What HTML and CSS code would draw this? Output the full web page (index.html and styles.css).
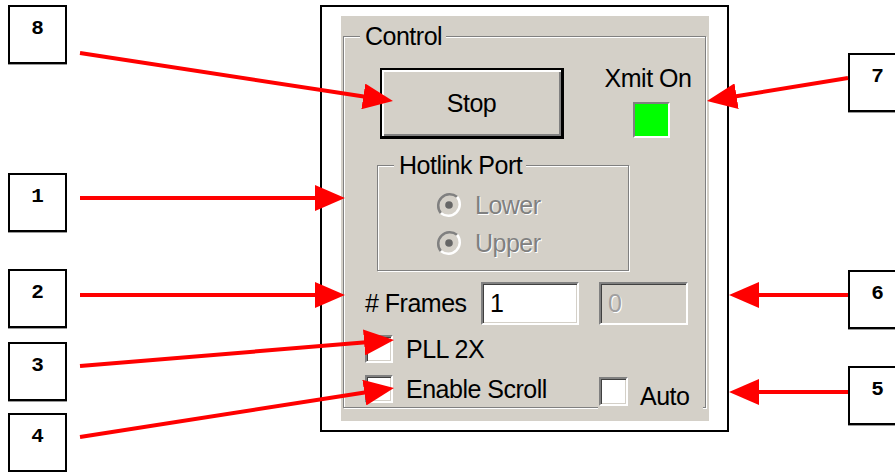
FILE: index.html
```
<!DOCTYPE html>
<html>
<head>
<meta charset="utf-8">
<link rel="stylesheet" href="styles.css">
</head>
<body>
<div class="canvas">
  <div class="frame">
    <div class="panel">
      <fieldset class="group control">
        <legend>Control</legend>
        <div class="top-row">
          <button class="btn">Stop</button>
          <div class="xmit">
            <span class="xmit-label">Xmit On</span>
            <span class="led"></span>
          </div>
        </div>
        <fieldset class="group hotlink">
          <legend>Hotlink Port</legend>
          <div class="radio">
            <svg class="radio-ico" viewBox="0 0 26 26" width="26" height="26">
              <circle cx="13" cy="13" r="11" fill="#d4d0c8"/>
              <path d="M4.9 21.1 A11.5 11.5 0 0 1 21.1 4.9" fill="none" stroke="#808080" stroke-width="2.5"/>
              <path d="M21.1 4.9 A11.5 11.5 0 0 1 4.9 21.1" fill="none" stroke="#ffffff" stroke-width="2.5"/>
              <circle cx="13" cy="13" r="3.8" fill="#666666"/>
            </svg>
            <span class="dis">Lower</span>
          </div>
          <div class="radio">
            <svg class="radio-ico" viewBox="0 0 26 26" width="26" height="26">
              <circle cx="13" cy="13" r="11" fill="#d4d0c8"/>
              <path d="M4.9 21.1 A11.5 11.5 0 0 1 21.1 4.9" fill="none" stroke="#808080" stroke-width="2.5"/>
              <path d="M21.1 4.9 A11.5 11.5 0 0 1 4.9 21.1" fill="none" stroke="#ffffff" stroke-width="2.5"/>
              <circle cx="13" cy="13" r="3.8" fill="#666666"/>
            </svg>
            <span class="dis">Upper</span>
          </div>
        </fieldset>
        <div class="frames-row">
          <span class="frames-label"># Frames</span>
          <div class="field">1</div>
          <div class="field field-dis">0</div>
        </div>
        <div class="check-row">
          <span class="box"></span>
          <span class="check-text">PLL 2X</span>
        </div>
        <div class="last-row">
          <div class="check-row scroll">
            <span class="box"></span>
            <span class="check-text">Enable Scroll</span>
          </div>
          <div class="auto">
            <span class="box"></span>
            <span class="check-text auto-text">Auto</span>
          </div>
        </div>
      </fieldset>
    </div>
  </div>

  <div class="callout c8">8</div>
  <div class="callout c1">1</div>
  <div class="callout c2">2</div>
  <div class="callout c3">3</div>
  <div class="callout c4">4</div>
  <div class="callout c7">7</div>
  <div class="callout c6">6</div>
  <div class="callout c5">5</div>

  <svg class="arrows" width="895" height="472" viewBox="0 0 895 472">
    <defs>
      <marker id="ah" markerUnits="userSpaceOnUse" markerWidth="30" markerHeight="26" refX="2" refY="13" orient="auto">
        <path d="M0,0 L30,13 L0,26 z" fill="#ff0000"/>
      </marker>
    </defs>
    <g stroke="#ff0000" stroke-width="4" marker-end="url(#ah)">
      <line x1="80" y1="53" x2="365.3" y2="96.7"/>
      <line x1="848" y1="78" x2="734.6" y2="96.5"/>
      <line x1="80" y1="198" x2="317" y2="198"/>
      <line x1="80" y1="295" x2="317" y2="295"/>
      <line x1="848" y1="295" x2="757" y2="295"/>
      <line x1="848" y1="392" x2="757" y2="392"/>
      <line x1="80" y1="366" x2="366.1" y2="342.3"/>
      <line x1="80" y1="437" x2="366.3" y2="392.3"/>
    </g>
  </svg>
</div>
</body>
</html>
```
FILE: styles.css
```
html, body {
  margin: 0;
  padding: 0;
  background: #ffffff;
}
.canvas {
  position: relative;
  width: 895px;
  height: 472px;
  overflow: hidden;
  font-family: "Liberation Sans", Arial, sans-serif;
}
.frame {
  position: absolute;
  left: 320px;
  top: 5px;
  width: 409px;
  height: 427px;
  box-sizing: border-box;
  border: 2px solid #000;
  background: #fff;
  padding: 9px 18px 9px 19px;
}
.panel {
  height: 100%;
  background: #d4d0c8;
  padding: 6px 0 0 2px;
  box-sizing: border-box;
  font-size: 25px;
  letter-spacing: -0.5px;
  color: #000;
}
.group {
  margin: 0;
  box-sizing: border-box;
  border: 1px solid #808080;
  box-shadow: inset 1px 1px 0 #fff, 1px 1px 0 #fff;
  min-inline-size: 0;
}
.group > legend {
  background: #d4d0c8;
  line-height: 28px;
  padding: 0 4px 0 5px;
}
.control {
  width: 363px;
  height: 386px;
  padding: 18px 0 0 21px;
}
.control > legend {
  margin-left: -5px;
}
.top-row {
  display: flex;
  align-items: flex-start;
}
.btn {
  margin: 0 0 0 15px;
  width: 184px;
  height: 71px;
  box-sizing: border-box;
  background: #d4d0c8;
  border-style: solid;
  border-color: #000;
  border-width: 2px 3px 3px 2px;
  box-shadow: inset 2px 2px 0 #fff, inset -2px -2px 0 #808080;
  font: inherit;
  letter-spacing: inherit;
  color: #000;
  padding: 0;
}
.xmit {
  margin: -4px 0 0 41px;
  width: 86px;
  display: flex;
  flex-direction: column;
  align-items: center;
}
.xmit-label {
  line-height: 28px;
  white-space: nowrap;
}
.led {
  margin: 10px 0 0 7px;
  width: 37px;
  height: 36px;
  box-sizing: border-box;
  background: #00ff00;
  border-style: solid;
  border-width: 2px;
  border-color: #808080 #fff #fff #808080;
}
.hotlink {
  margin: 12px 0 0 12px;
  width: 252px;
  height: 120px;
  padding: 7px 0 0 58px;
}
.hotlink > legend {
  margin-left: -42px;
}
.radio {
  display: flex;
  align-items: center;
  height: 38px;
}
.radio-ico {
  flex: none;
}
.dis {
  margin-left: 13px;
  color: #808080;
  text-shadow: 1px 1px 0 #fff;
}
.frames-row {
  display: flex;
  align-items: center;
  margin-top: 11px;
}
.frames-label {
  width: 116px;
  white-space: nowrap;
}
.field {
  width: 98px;
  height: 43px;
  box-sizing: border-box;
  background: #fff;
  border-style: solid;
  border-width: 2px;
  border-color: #808080 #fff #fff #808080;
  box-shadow: inset 1px 1px 0 #404040, inset -1px -1px 0 #d4d0c8;
  padding-left: 7px;
  line-height: 39px;
}
.field-dis {
  width: 89px;
  margin-left: 20px;
  background: #d4d0c8;
  color: #a0a0a0;
  text-shadow: 1px 1px 0 #fff;
}
.check-row {
  display: flex;
  align-items: center;
  margin-top: 10px;
}
.box {
  flex: none;
  width: 28px;
  height: 28px;
  box-sizing: border-box;
  background: #fff;
  border-style: solid;
  border-width: 2px;
  border-color: #808080 #fff #fff #808080;
  box-shadow: inset 1px 1px 0 #404040, inset -1px -1px 0 #d4d0c8;
}
.check-text {
  margin-left: 13px;
  line-height: 28px;
  white-space: nowrap;
}
.last-row {
  display: flex;
  align-items: flex-start;
  margin-top: 12px;
}
.last-row .scroll {
  margin-top: 0;
  width: 233px;
}
.auto {
  display: flex;
  align-items: flex-start;
  width: 105px;
  box-sizing: border-box;
  background: #d4d0c8;
  padding: 2px 0 4px 1px;
}
.auto .box {
  width: 29px;
  height: 29px;
}
.auto-text {
  margin-left: 12px;
  margin-top: 5px;
}
.callout {
  position: absolute;
  width: 59px;
  height: 59px;
  box-sizing: border-box;
  border: 2px solid #000;
  box-shadow: 0 1px 0 #9a9a9a;
  background: #fff;
  text-align: center;
  font: bold 21px/24px "Liberation Mono", "DejaVu Sans Mono", monospace;
  padding-top: 10px;
  color: #000;
}
.c8 { left: 8px; top: 5px; }
.c1 { left: 8px; top: 173px; }
.c2 { left: 8px; top: 269px; }
.c3 { left: 8px; top: 342px; }
.c4 { left: 8px; top: 413px; }
.c7 { left: 848px; top: 53px; }
.c6 { left: 848px; top: 270px; }
.c5 { left: 848px; top: 366px; }
.arrows {
  position: absolute;
  left: 0;
  top: 0;
  pointer-events: none;
}
```
